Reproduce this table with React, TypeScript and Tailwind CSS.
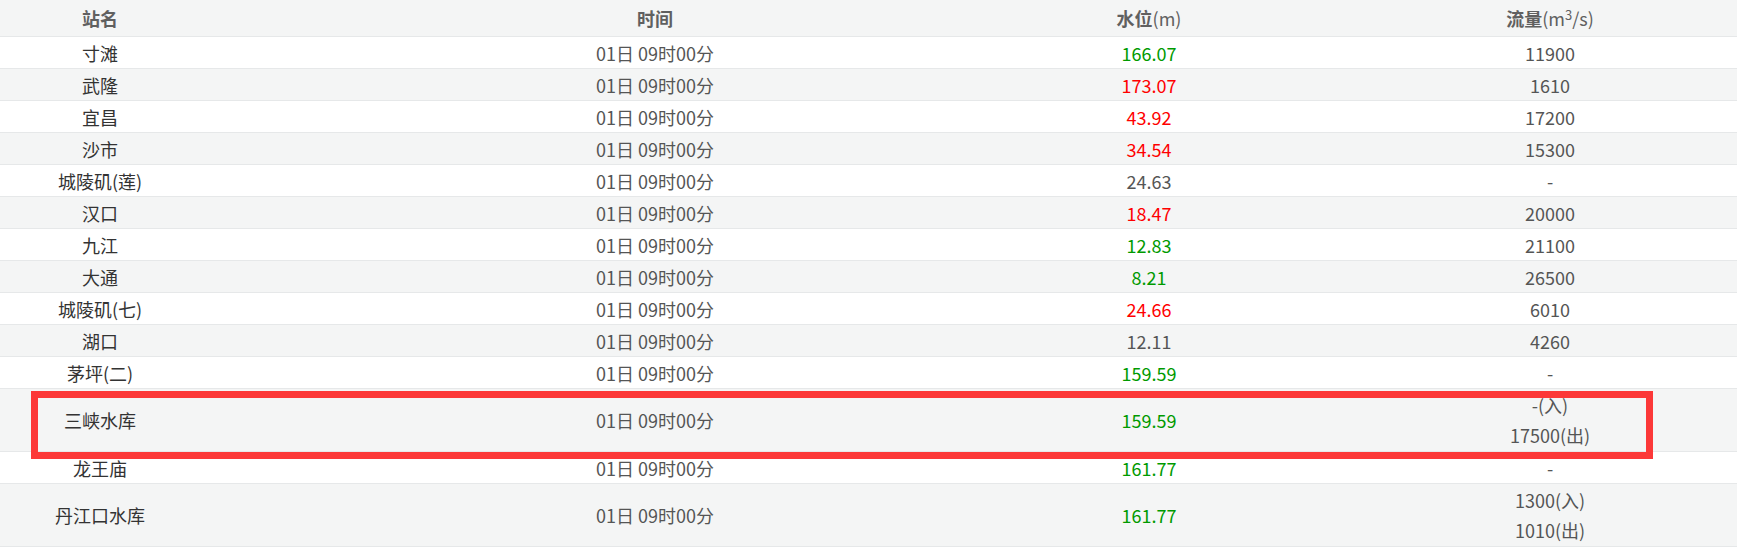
const ROWS = [
  { name: '寸滩', level: '166.07', tone: 'green', flow: ['11900'] },
  { name: '武隆', level: '173.07', tone: 'red', flow: ['1610'] },
  { name: '宜昌', level: '43.92', tone: 'red', flow: ['17200'] },
  { name: '沙市', level: '34.54', tone: 'red', flow: ['15300'] },
  { name: '城陵矶(莲)', level: '24.63', tone: 'grey', flow: ['-'] },
  { name: '汉口', level: '18.47', tone: 'red', flow: ['20000'] },
  { name: '九江', level: '12.83', tone: 'green', flow: ['21100'] },
  { name: '大通', level: '8.21', tone: 'green', flow: ['26500'] },
  { name: '城陵矶(七)', level: '24.66', tone: 'red', flow: ['6010'] },
  { name: '湖口', level: '12.11', tone: 'grey', flow: ['4260'] },
  { name: '茅坪(二)', level: '159.59', tone: 'green', flow: ['-'] },
  { name: '三峡水库', level: '159.59', tone: 'green', flow: ['-(入)', '17500(出)'], marked: true },
  { name: '龙王庙', level: '161.77', tone: 'green', flow: ['-'] },
  { name: '丹江口水库', level: '161.77', tone: 'green', flow: ['1300(入)', '1010(出)'] },
]

const TONES: Record<string, string> = {
  green: 'text-[#009a00]',
  red: 'text-[#ff0000]',
  grey: 'text-[#555555]',
}

const GRID = 'grid grid-cols-[200px_910px_78px_724px] w-[1912px]'

function App() {
  return (
    <div
      className="w-full overflow-hidden bg-white text-[18px]"
      style={{ fontFamily: '"Noto Sans CJK SC", "Noto Sans", sans-serif' }}
    >
      {/* header */}
      <div className={`${GRID} h-[37px] bg-[#f4f5f5] border-b border-[#e6e8e9] text-[#606060] font-bold leading-[36px]`}>
        <div className="text-center">站名</div>
        <div className="text-center">时间</div>
        <div className="text-center whitespace-nowrap">
          水位<span className="font-normal">(m)</span>
        </div>
        <div className="text-center whitespace-nowrap">
          流量<span className="font-normal">(m<sup className="text-[13px]">3</sup>/s)</span>
        </div>
      </div>

      {/* rows */}
      <div className="relative">
        {ROWS.map((r, i) => (
          <div
            key={r.name}
            className={`${GRID} relative items-center border-b border-[#e6e8e9] ${
              i % 2 === 1 ? 'bg-[#f4f5f5]' : 'bg-white'
            } ${r.flow.length > 1 ? 'h-[63px]' : 'h-[32px]'}`}
          >
            <div className="text-center text-[#333333] leading-[30px]">{r.name}</div>
            <div className="text-center text-[#555555] leading-[30px]">01日 09时00分</div>
            <div className={`text-center leading-[30px] ${TONES[r.tone]}`}>{r.level}</div>
            <div className="text-center text-[#555555] leading-[30px]">
              {r.flow.map(f => (
                <div key={f}>{f}</div>
              ))}
            </div>
            {/* highlight annotation */}
            {r.marked && (
              <div className="absolute z-10 left-[31px] top-[2px] w-[1622px] h-[68px] border-[7px] border-[#fc3838]" />
            )}
          </div>
        ))}
      </div>
    </div>
  )
}

export default App
